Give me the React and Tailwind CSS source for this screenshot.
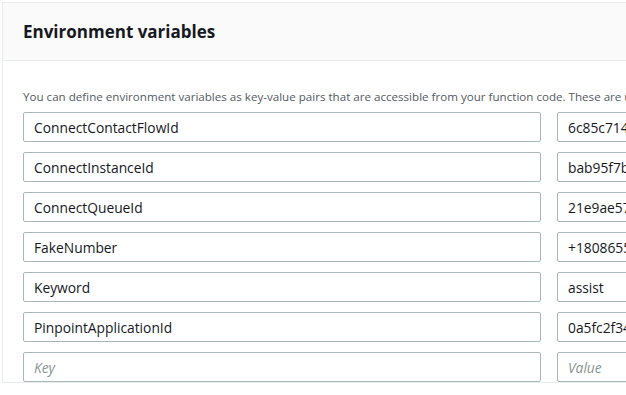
import React from "react";

const vars = [
  ["ConnectContactFlowId", "6c85c714-0d2a-4f3e-9b1a-7e2c5d8f9a01"],
  ["ConnectInstanceId", "bab95f7b-3c1e-4d2a-8f6b-2a9e7c4d1b03"],
  ["ConnectQueueId", "21e9ae57-8b4c-4e1f-a2d3-6f7b8c9d0e12"],
  ["FakeNumber", "+18086551234"],
  ["Keyword", "assist"],
  ["PinpointApplicationId", "0a5fc2f34b6d4e8a9c1b2d3e4f5a6b7c"],
];

const inputCls =
  "h-[30px] shrink-0 rounded-[2px] border border-[#aab7b8] bg-white px-[10px] text-[13.8px] text-[#16191f] outline-none placeholder:italic placeholder:text-[#879596]";

export default function App() {
  return (
    <div className="h-[395px] w-[626px] overflow-hidden bg-white pl-[2px] pt-[2px] font-['Open_Sans',sans-serif]">
      <div className="w-[700px] border border-[#eaeded] bg-white">
        <div className="flex h-[58px] items-center border-b border-[#eaeded] bg-[#fafafa] pl-[20px]">
          <h2 className="text-[17px] font-bold text-[#16191f]">Environment variables</h2>
        </div>
        <div className="pl-[20px] pt-[27px]">
          <p className="whitespace-nowrap text-[11.6px] leading-[18px] text-[#545b64]">
            You can define environment variables as key-value pairs that are accessible from your function code. These are useful to store configuration settings.
          </p>
          <div className="mt-[6px] flex flex-col gap-[10px]">
            {vars.map(([k, v]) => (
              <div key={k} className="flex gap-[16px]">
                <input className={inputCls + " w-[518px]"} defaultValue={k} />
                <input className={inputCls + " w-[200px]"} defaultValue={v} />
              </div>
            ))}
            <div className="flex gap-[16px]">
              <input className={inputCls + " w-[518px]"} placeholder="Key" />
              <input className={inputCls + " w-[200px]"} placeholder="Value" />
            </div>
          </div>
        </div>
      </div>
    </div>
  );
}
